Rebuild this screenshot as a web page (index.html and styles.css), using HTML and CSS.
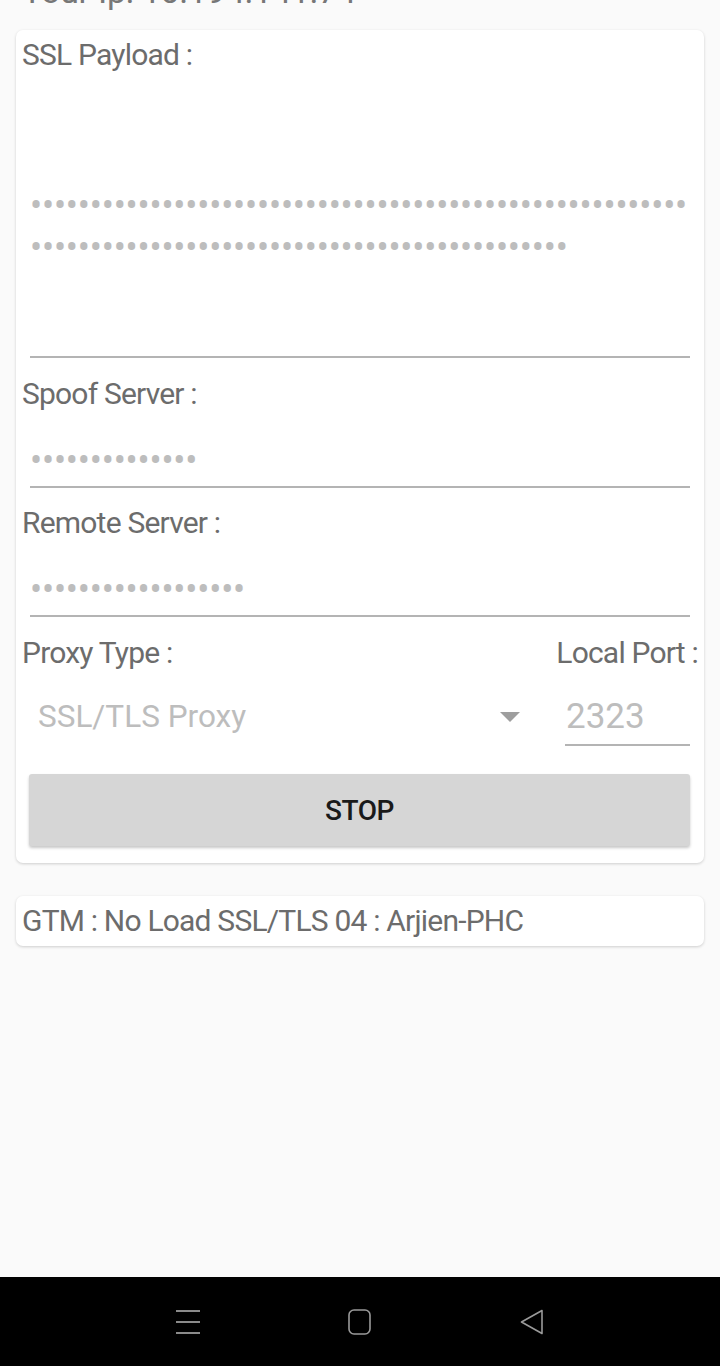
FILE: index.html
```html
<!DOCTYPE html>
<html lang="en">
<head>
  <meta charset="UTF-8">
  <meta name="viewport" content="width=device-width, initial-scale=1.0">
  <title>SSL Tunnel</title>
  <link rel="stylesheet" href="styles.css">
</head>
<body>
  <div class="screen">
    <div class="ip-bar">
      <div class="ip-text">Your Ip: 10.194.141.74</div>
    </div>

    <div class="card settings">
      <div class="label">SSL Payload :</div>
      <div class="field payload">
        <div class="dots">•••••••••••••••••••••••••••••••••••••••••••••••••••••••</div>
        <div class="dots">•••••••••••••••••••••••••••••••••••••••••••••</div>
      </div>

      <div class="label">Spoof Server :</div>
      <div class="field">
        <div class="dots">••••••••••••••</div>
      </div>

      <div class="label">Remote Server :</div>
      <div class="field">
        <div class="dots">••••••••••••••••••</div>
      </div>

      <div class="row labels">
        <div class="label">Proxy Type :</div>
        <div class="label">Local Port :</div>
      </div>
      <div class="row inputs">
        <div class="spinner">
          <span>SSL/TLS Proxy</span>
          <span class="arrow"></span>
        </div>
        <div class="port">2323</div>
      </div>

      <button class="stop">STOP</button>
    </div>

    <div class="card status">GTM : No Load SSL/TLS 04 : Arjien-PHC</div>
  </div>

  <nav class="navbar">
    <svg width="26" height="26" viewBox="0 0 26 26">
      <path d="M1 2h24M1 13h24M1 24h24" stroke="#8a8a8a" stroke-width="2" fill="none"/>
    </svg>
    <svg width="26" height="28" viewBox="0 0 26 28">
      <rect x="2" y="2" width="21" height="24" rx="5" stroke="#9a9a9a" stroke-width="1.6" fill="none"/>
    </svg>
    <svg width="26" height="28" viewBox="0 0 26 28">
      <path d="M23 2.5 L2.5 14 L23 25.5 Z" stroke="#9a9a9a" stroke-width="1.6" stroke-linejoin="round" fill="none"/>
    </svg>
  </nav>
</body>
</html>
```

FILE: styles.css
```css
body {
  margin: 0;
  height: 1366px;
  display: flex;
  flex-direction: column;
  background-color: #fafafa;
  font-family: Roboto, "Noto Sans", sans-serif;
  color: #6c6c6c;
}
.screen {
  flex: 1;
}
.ip-bar {
  height: 10px;
  overflow: hidden;
}
.ip-text {
  margin-top: -27px;
  padding-left: 22px;
  font-size: 34px;
  line-height: 36px;
  letter-spacing: -0.3px;
  color: #777;
}
.card {
  background: white;
  margin: 0 16px;
  border-radius: 7px;
  box-shadow: 0 1px 3px rgba(0, 0, 0, 0.18);
}
.settings {
  margin-top: 20px;
  padding: 10px 0 17px 0;
}
.label {
  padding-left: 6px;
  font-size: 30px;
  line-height: 30px;
  letter-spacing: -0.8px;
}
.field {
  margin: 0 14px 20.5px 14px;
  padding: 31px 0 4px 0;
  border-bottom: 2px solid #b4b4b4;
}
.field.payload {
  padding-top: 115px;
  padding-bottom: 87px;
}
.dots {
  font-size: 36px;
  line-height: 42px;
  letter-spacing: -0.2px;
  color: #bdbdbd;
  white-space: nowrap;
}
.row {
  display: flex;
  justify-content: space-between;
}
.row.labels .label {
  padding-right: 6px;
}
.row.inputs {
  align-items: flex-end;
  margin: 27.5px 14px 0 14px;
}
.spinner {
  flex: 1;
  display: flex;
  align-items: center;
  justify-content: space-between;
  padding: 0 0 9px 8px;
  font-size: 31.5px;
  line-height: 40px;
  color: #bdbdbd;
}
.arrow {
  width: 0;
  height: 0;
  margin-right: 45px;
  border-left: 10px solid transparent;
  border-right: 10px solid transparent;
  border-top: 10px solid #9e9e9e;
}
.port {
  width: 124px;
  padding: 0 0 5px 1px;
  font-size: 35px;
  line-height: 44px;
  color: #bdbdbd;
  border-bottom: 2px solid #b4b4b4;
}
.stop {
  display: block;
  width: calc(100% - 27px);
  height: 72px;
  margin: 28px 14px 0 13px;
  border: none;
  border-radius: 3px;
  background-color: #d6d6d6;
  box-shadow: 0 2px 3px rgba(0, 0, 0, 0.22);
  font-family: Roboto, "Noto Sans", sans-serif;
  font-size: 28px;
  font-weight: 500;
  letter-spacing: -0.5px;
  color: #1a1a1a;
}
.status {
  margin-top: 33px;
  padding: 8px 6px 9px 6px;
  font-size: 30px;
  line-height: 33px;
  letter-spacing: -0.8px;
}
.navbar {
  height: 89px;
  background: black;
  display: flex;
  align-items: center;
  justify-content: center;
  gap: 146px;
}
```
